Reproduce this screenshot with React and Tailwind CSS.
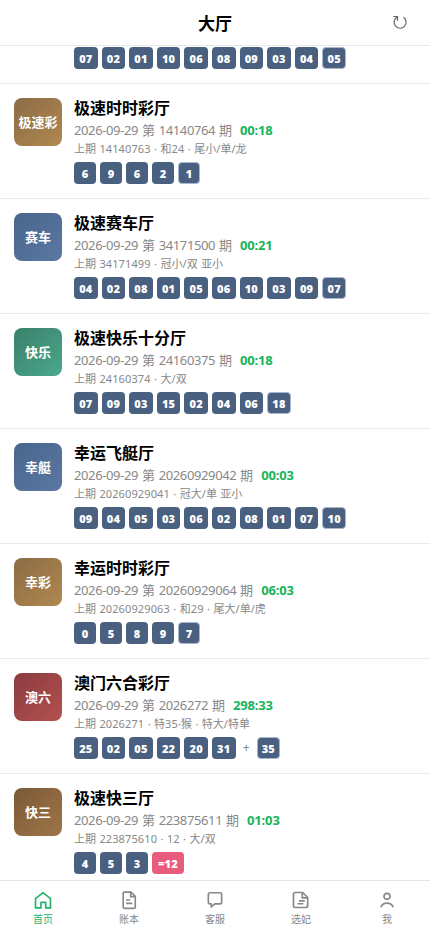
import React from "react";

const rooms = [
  {
    name: "极速时时彩厅",
    icon: "极速彩",
    tone: "from-[#8c6c45] to-[#b08850]",
    issue: "14140764",
    time: "00:18",
    last: "14140763 · 和24 · 尾小/单/龙",
    balls: ["6", "9", "6", "2", "1"],
  },
  {
    name: "极速赛车厅",
    icon: "赛车",
    tone: "from-[#48658c] to-[#5b78a3]",
    issue: "34171500",
    time: "00:21",
    last: "34171499 · 冠小/双 亚小",
    balls: ["04", "02", "08", "01", "05", "06", "10", "03", "09", "07"],
  },
  {
    name: "极速快乐十分厅",
    icon: "快乐",
    tone: "from-[#3b806b] to-[#49a98c]",
    issue: "24160375",
    time: "00:18",
    last: "24160374 · 大/双",
    balls: ["07", "09", "03", "15", "02", "04", "06", "18"],
  },
  {
    name: "幸运飞艇厅",
    icon: "幸艇",
    tone: "from-[#48658c] to-[#5b78a3]",
    issue: "20260929042",
    time: "00:03",
    last: "20260929041 · 冠大/单 亚小",
    balls: ["09", "04", "05", "03", "06", "02", "08", "01", "07", "10"],
  },
  {
    name: "幸运时时彩厅",
    icon: "幸彩",
    tone: "from-[#8c6c45] to-[#b08850]",
    issue: "20260929064",
    time: "06:03",
    last: "20260929063 · 和29 · 尾大/单/虎",
    balls: ["0", "5", "8", "9", "7"],
  },
  {
    name: "澳门六合彩厅",
    icon: "澳六",
    tone: "from-[#8a3c40] to-[#b5504f]",
    issue: "2026272",
    time: "298:33",
    last: "2026271 · 特35·猴 · 特大/特单",
    balls: ["25", "02", "05", "22", "20", "31", "+", "35"],
  },
  {
    name: "极速快三厅",
    icon: "快三",
    tone: "from-[#7a5936] to-[#a0764a]",
    issue: "223875611",
    time: "01:03",
    last: "223875610 · 12 · 大/双",
    balls: ["4", "5", "3"],
    sum: "=12",
  },
];

const topBalls = ["07", "02", "01", "10", "06", "08", "09", "03", "04", "05"];

// Track the digits only, Chinese characters keep their full width
const Mixed = ({ text, className }) =>
  text.split(/([\x20-\x7e·]+)/).map((part, i) =>
    i % 2 ? (
      <span key={i} className={className}>
        {part}
      </span>
    ) : (
      part
    )
  );

const Ball = ({ value, last }) => {
  if (value === "+") {
    return <span className="w-[13px] text-center text-[12px] leading-none text-[#888]">+</span>;
  }
  const size = value.length > 1 ? "w-[23.6px]" : "w-[22px]";
  const border = last ? "border border-[#a9b8ce]" : "";
  return (
    <span
      className={`flex h-[22px] items-center justify-center rounded-[4px] bg-[#4a6080] text-[11px] leading-none font-black tracking-[0.2px] text-white ${size} ${border}`}
    >
      {value}
    </span>
  );
};

const BallRow = ({ balls, sum }) => (
  <div className="flex items-center gap-1">
    {balls.map((value, i) => (
      <Ball key={i} value={value} last={!sum && i === balls.length - 1} />
    ))}
    {sum && (
      <span className="flex h-[22px] w-8 items-center justify-center rounded-[4px] bg-[#e85d7d] text-[11px] leading-none font-black tracking-[0.3px] text-white">
        {sum}
      </span>
    )}
  </div>
);

const RoomItem = ({ room }) => (
  <div className="flex h-[115px] shrink-0 gap-3 border-b border-[#ebebeb] px-[14px] pt-[14px]">
    <div
      className={`flex size-12 shrink-0 items-center justify-center rounded-[8px] bg-linear-135 pt-px text-[13px] font-bold text-white ${room.tone}`}
    >
      {room.icon}
    </div>
    <div className="whitespace-nowrap">
      <div className="h-[23px] text-[16px] leading-[21px] font-bold text-black">{room.name}</div>
      <div className="h-[19px] text-[13px] leading-[19px] text-[#888]">
        <Mixed
          text={`2026-09-29 第 ${room.issue} 期`}
          className="tracking-[-0.38px] [word-spacing:0.8px]"
        />
        <span className="ml-2 font-bold tracking-[-0.15px] text-[#18b45b]">{room.time}</span>
      </div>
      <div className="h-[22px] text-[11px] leading-[17px] text-[#888]">
        <Mixed text={`上期 ${room.last}`} className="tracking-[0.12px] [word-spacing:0.4px]" />
      </div>
      <BallRow balls={room.balls} sum={room.sum} />
    </div>
  </div>
);

const tabs = [
  { label: "首页", paths: ["M3 10.3 12 3.2l9 7.1v11.2h-5.8v-6.700H9.600v6.700H3z"] },
  {
    label: "账本",
    paths: [
      "M6 2.5h8.500l5 5V20a2 2 0 0 1-2 2H6.500a1.500 1.500 0 0 1-1.500-1.500V4a1.500 1.500 0 0 1 1.500-1.500z",
      "M14 2.500v5.500h5.500",
      "M8.500 12h5M8.500 16h7.500",
    ],
  },
  {
    label: "客服",
    paths: ["M6 3.300h12a2 2 0 0 1 2 2v9.400a2 2 0 0 1-2 2h-6.200L7.500 20.300v-3.600H6a2 2 0 0 1-2-2V5.300a2 2 0 0 1 2-2z"],
  },
  {
    label: "选妃",
    paths: [
      "M5 3h9l6 6v10a2 2 0 0 1-2 2H5a2 2 0 0 1-2-2V5a2 2 0 0 1 2-2z",
      "M13.500 3v6.500H20",
      "M9.500 13h7M7.800 16.500h7",
    ],
  },
  {
    label: "我",
    paths: ["M12 4a3.600 3.600 0 1 1 0 7.200 3.600 3.600 0 0 1 0-7.200z", "M4.600 20.800c1-3.300 3.700-5 7.400-5s6.400 1.700 7.400 5"],
  },
];

const App = () => {
  return (
    <div className="flex h-[932px] w-[430px] flex-col overflow-hidden bg-white font-['Noto_Sans','Noto_Sans_CJK_SC',sans-serif]">
      <header className="grid h-[46px] shrink-0 grid-cols-[1fr_auto_1fr] items-center border-b border-[#e8e8e8]">
        <h1 className="col-start-2 pt-[2px] text-[17px] font-bold text-black">大厅</h1>
        <button className="mr-[22px] justify-self-end text-[#666]">
          <svg className="size-4" viewBox="0 0 16 16" fill="none" stroke="currentColor" strokeWidth="1.2">
            <path d="M11.5 2.300a6 6 0 1 1-6.300-.300" />
            <path d="M1.300 1.500h4.200v4.300" />
          </svg>
        </button>
      </header>

      <main className="flex min-h-0 flex-1 flex-col">
        <div className="h-[38px] shrink-0 border-b border-[#ebebeb] pt-px pl-[74px]">
          <BallRow balls={topBalls} />
        </div>
        {rooms.map((room) => (
          <RoomItem key={room.name} room={room} />
        ))}
      </main>

      <nav className="z-10 grid h-[52px] shrink-0 grid-cols-5 border-t border-[#e5e5e5] bg-white">
        {tabs.map((tab, i) => (
          <div
            key={tab.label}
            className={`flex flex-col items-center pt-[9px] text-[10px] leading-[15px] ${i === 0 ? "text-[#1fb46a]" : "text-[#888]"}`}
          >
            <svg
              className="mb-[2px] size-5"
              viewBox="0 0 24 24"
              fill="none"
              stroke="currentColor"
              strokeWidth="2"
              strokeLinejoin="round"
            >
              {tab.paths.map((d) => (
                <path key={d} d={d} />
              ))}
            </svg>
            {tab.label}
          </div>
        ))}
      </nav>
    </div>
  );
};

export default App;
